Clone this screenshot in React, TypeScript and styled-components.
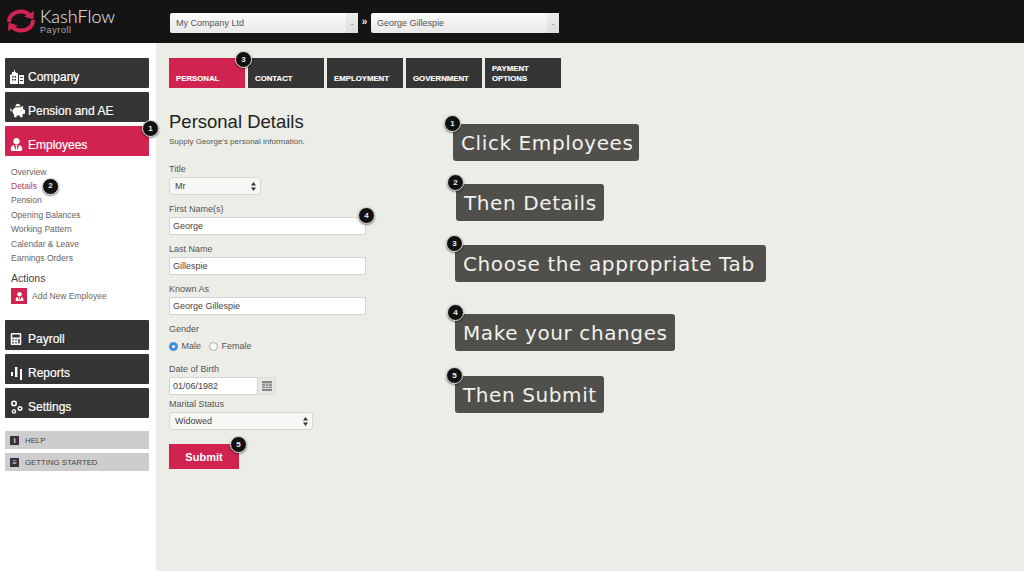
import React from "react";
import styled, { createGlobalStyle } from "styled-components";
import { FaCalculator, FaPiggyBank, FaUserTie } from "react-icons/fa";

const crimson = "#d0234f";
const darkButton = "#353535";

function Logo() {
  return (
    <svg width="30" height="24" viewBox="0 0 30 24" fill="none">
      <path d="M3 13C3 6 9 2.500 15 2.500c4 0 7 1.500 8.500 4" stroke={crimson} strokeWidth="4" />
      <path d="M27 11c0 7-6 10.500-12 10.500-4 0-7-1.500-8.500-4" stroke={crimson} strokeWidth="4" />
      <path d="M18 7.500l9.500 3L28 2z" fill={crimson} />
      <path d="M12 16.500l-9.500-3L2 22z" fill={crimson} />
    </svg>
  );
}

function CompanyIcon() {
  return (
    <svg width="14" height="14" viewBox="0 0 14 14" fill="#fff">
      <path d="M4 0h1v2l3 1.500V14H0V5l2-1V2h2z" />
      <rect x="9" y="5" width="5" height="9" />
      <g fill={darkButton}>
        <rect x="2" y="6" width="1.500" height="1.500" />
        <rect x="4.500" y="6" width="1.500" height="1.500" />
        <rect x="2" y="9" width="1.500" height="1.500" />
        <rect x="4.500" y="9" width="1.500" height="1.500" />
        <rect x="10" y="7" width="3" height="1" />
        <rect x="10" y="10" width="3" height="1" />
      </g>
    </svg>
  );
}

function BarsIcon() {
  return (
    <svg width="13" height="14" viewBox="0 0 13 14" fill="#fff">
      <rect x="1" y="6" width="2" height="4" />
      <rect x="5" y="1" width="2.400" height="10" />
      <rect x="10" y="3" width="2" height="11" />
    </svg>
  );
}

function GearsIcon() {
  return (
    <svg width="13" height="14" viewBox="0 0 13 14" fill="none" stroke="#fff">
      <circle cx="4" cy="3.500" r="2.200" strokeWidth="1.600" />
      <circle cx="10" cy="8.500" r="1.800" strokeWidth="1.400" />
      <circle cx="4" cy="11.500" r="1.600" strokeWidth="1.400" />
    </svg>
  );
}

function CalendarIcon() {
  return (
    <svg width="10" height="10" viewBox="0 0 10 10" fill="#86868a">
      <rect width="10" height="2.400" />
      <rect y="3.200" width="3" height="1.600" />
      <rect x="3.500" y="3.200" width="3" height="1.600" />
      <rect x="7" y="3.200" width="3" height="1.600" />
      <rect y="5.600" width="3" height="1.600" />
      <rect x="3.500" y="5.600" width="3" height="1.600" />
      <rect x="7" y="5.600" width="3" height="1.600" />
      <rect y="8" width="10" height="2" />
    </svg>
  );
}

function UpDown() {
  return (
    <svg width="5" height="9" viewBox="0 0 5 9" fill="#333">
      <path d="M2.500 0L5 3.600H0z" />
      <path d="M2.500 9L0 5.400H5z" />
    </svg>
  );
}

function App() {
  return (
    <Page>
      <GlobalStyle />
      <Header>
        <Brand>
          <Logo />
          <BrandText>
            <BrandName>KashFlow</BrandName>
            <BrandSub>Payroll</BrandSub>
          </BrandText>
        </Brand>
        <TopSelect>
          My Company Ltd
          <TopSelectArrow>-</TopSelectArrow>
        </TopSelect>
        <Chevron>»</Chevron>
        <TopSelect>
          George Gillespie
          <TopSelectArrow>-</TopSelectArrow>
        </TopSelect>
      </Header>

      <Columns>
        <Sidebar>
          <NavStack>
            <NavButton><NavIcon><CompanyIcon /></NavIcon>Company</NavButton>
            <NavButton><NavIcon><FaPiggyBank size={15} /></NavIcon>Pension and AE</NavButton>
            <NavButton $active>
              <NavIcon><FaUserTie size={13} /></NavIcon>Employees
              <Badge $left={137} $top={-6}>1</Badge>
            </NavButton>
          </NavStack>

          <SubNav>
            <SubLink>Overview</SubLink>
            <SubLink $active>
              Details
              <Badge $left={31} $top={-1}>2</Badge>
            </SubLink>
            <SubLink>Pension</SubLink>
            <SubLink>Opening Balances</SubLink>
            <SubLink>Working Pattern</SubLink>
            <SubLink>Calendar &amp; Leave</SubLink>
            <SubLink>Earnings Orders</SubLink>
          </SubNav>

          <ActionsTitle>Actions</ActionsTitle>
          <ActionRow>
            <ActionIcon><FaUserTie size={9} /></ActionIcon>
            Add New Employee
          </ActionRow>

          <NavStack $top={16}>
            <NavButton><NavIcon><FaCalculator size={12} /></NavIcon>Payroll</NavButton>
            <NavButton><NavIcon><BarsIcon /></NavIcon>Reports</NavButton>
            <NavButton><NavIcon><GearsIcon /></NavIcon>Settings</NavButton>
          </NavStack>

          <HelpStack>
            <HelpLink><HelpIcon>i</HelpIcon>HELP</HelpLink>
            <HelpLink><HelpIcon>≡</HelpIcon>GETTING STARTED</HelpLink>
          </HelpStack>
        </Sidebar>

        <Main>
          <Tabs>
            <Tab $active>PERSONAL</Tab>
            <Tab>
              CONTACT
              <Badge $left={-13} $top={-7}>3</Badge>
            </Tab>
            <Tab>EMPLOYMENT</Tab>
            <Tab>GOVERNMENT</Tab>
            <Tab>PAYMENT<br />OPTIONS</Tab>
          </Tabs>

          <Body>
            <Form>
              <Heading>Personal Details</Heading>
              <Intro>Supply George's personal information.</Intro>

              <FieldLabel $top={16}>Title</FieldLabel>
              <SelectBox $width={92}>Mr<UpDown /></SelectBox>

              <FieldLabel>First Name(s)</FieldLabel>
              <TextBox $width={197}>
                George
                <Badge $left={188} $top={-11}>4</Badge>
              </TextBox>

              <FieldLabel>Last Name</FieldLabel>
              <TextBox $width={197}>Gillespie</TextBox>

              <FieldLabel>Known As</FieldLabel>
              <TextBox $width={197}>George Gillespie</TextBox>

              <FieldLabel>Gender</FieldLabel>
              <RadioRow>
                <RadioDot $checked />
                <RadioText>Male</RadioText>
                <RadioDot />
                <RadioText>Female</RadioText>
              </RadioRow>

              <FieldLabel $top={9}>Date of Birth</FieldLabel>
              <DateRow>
                <TextBox $width={89}>01/06/1982</TextBox>
                <DateAddon><CalendarIcon /></DateAddon>
              </DateRow>

              <FieldLabel $top={3}>Marital Status</FieldLabel>
              <SelectBox $width={144}>Widowed<UpDown /></SelectBox>

              <SubmitButton>
                Submit
                <Badge $left={61} $top={-8}>5</Badge>
              </SubmitButton>
            </Form>

            <Callouts>
              <Callout $top={36} $left={0} $width={186}>
                <Badge $left={-9} $top={-9}>1</Badge>
                Click Employees
              </Callout>
              <Callout $top={23.5} $left={3} $width={148}>
                <Badge $left={-9} $top={-10}>2</Badge>
                Then Details
              </Callout>
              <Callout $top={24.5} $left={2} $width={311}>
                <Badge $left={-9} $top={-10}>3</Badge>
                Choose the appropriate Tab
              </Callout>
              <Callout $top={32.5} $left={2} $width={220}>
                <Badge $left={-8} $top={-10}>4</Badge>
                Make your changes
              </Callout>
              <Callout $top={25.5} $left={2} $width={149}>
                <Badge $left={-9} $top={-9}>5</Badge>
                Then Submit
              </Callout>
            </Callouts>
          </Body>
        </Main>
      </Columns>
    </Page>
  );
}

const GlobalStyle = createGlobalStyle`
  html, body {
    margin: 0;
    padding: 0;
    background: #edede7;
  }
  * {
    box-sizing: border-box;
  }
`;

const Page = styled.div`
  width: 1024px;
  height: 571px;
  overflow: hidden;
  display: flex;
  flex-direction: column;
  font-family: "Liberation Sans", Arial, sans-serif;
  color: #444;
`;

const Header = styled.header`
  height: 43px;
  flex: none;
  background: #141414;
  display: flex;
  align-items: flex-start;
  padding-left: 6px;
`;

const Brand = styled.div`
  width: 164px;
  margin-top: 7px;
  display: flex;
  align-items: flex-start;
  gap: 4px;

  svg {
    margin-top: 2px;
  }
`;

const BrandText = styled.div`
  display: flex;
  flex-direction: column;
`;

const BrandName = styled.div`
  font-family: "Lato", sans-serif;
  font-weight: 300;
  font-size: 18px;
  line-height: 18px;
  color: #f2f2f2;
`;

const BrandSub = styled.div`
  font-size: 9px;
  line-height: 10px;
  letter-spacing: 0.6px;
  color: #aaa;
`;

const TopSelect = styled.div`
  width: 188px;
  height: 20px;
  margin-top: 13px;
  background: linear-gradient(#fafafa, #e9e9e9);
  border-radius: 2px;
  font-size: 9px;
  color: #555;
  display: flex;
  align-items: center;
  justify-content: space-between;
  padding-left: 6px;
`;

const TopSelectArrow = styled.div`
  width: 12px;
  height: 100%;
  background: linear-gradient(#eeeeee, #dcdcdc);
  color: #666;
  font-size: 8px;
  display: flex;
  align-items: center;
  justify-content: center;
`;

const Chevron = styled.div`
  width: 13px;
  margin-top: 16px;
  text-align: center;
  color: #eee;
  font-size: 10px;
  font-weight: bold;
`;

const Columns = styled.div`
  flex: 1;
  display: flex;
`;

const Sidebar = styled.aside`
  width: 156px;
  flex: none;
  background: #fff;
  padding: 15px 7px 0 5px;
`;

const NavStack = styled.div<{ $top?: number }>`
  display: flex;
  flex-direction: column;
  gap: 4px;
  margin-top: ${(p) => p.$top ?? 0}px;
`;

const NavButton = styled.div<{ $active?: boolean }>`
  position: relative;
  height: 30px;
  border-radius: 1px;
  background: ${(p) => (p.$active ? crimson : darkButton)};
  color: #fff;
  font-size: 12px;
  display: flex;
  align-items: center;
  padding: 7px 0 0 5px;
  -webkit-text-stroke: 0.2px #fff;
`;

const NavIcon = styled.span`
  width: 18px;
  display: flex;
  align-items: center;
`;

const Badge = styled.span<{ $left: number; $top: number }>`
  position: absolute;
  left: ${(p) => p.$left}px;
  top: ${(p) => p.$top}px;
  width: 17px;
  height: 17px;
  border-radius: 50%;
  background: #111;
  border: 1.5px solid #e4e4e0;
  box-shadow: 0 1px 2px rgba(0, 0, 0, 0.5);
  color: #eee;
  font-family: "Liberation Sans", Arial, sans-serif;
  font-size: 8px;
  font-weight: bold;
  letter-spacing: 0;
  -webkit-text-stroke: 0;
  display: flex;
  align-items: center;
  justify-content: center;
  z-index: 2;
`;

const SubNav = styled.nav`
  margin-top: 8.5px;
  padding-left: 6px;
`;

const SubLink = styled.div<{ $active?: boolean }>`
  position: relative;
  height: 14.45px;
  line-height: 14.45px;
  font-size: 8.5px;
  color: ${(p) => (p.$active ? "#b03a5b" : "#666")};
`;

const ActionsTitle = styled.div`
  margin: 6px 0 0 6px;
  font-size: 10.5px;
  line-height: 13px;
  color: #444;
`;

const ActionRow = styled.div`
  margin: 3.5px 0 0 6px;
  display: flex;
  align-items: center;
  gap: 5px;
  font-size: 8.5px;
  color: #666;
`;

const ActionIcon = styled.span`
  width: 16px;
  height: 16px;
  background: ${crimson};
  color: #fff;
  display: flex;
  align-items: center;
  justify-content: center;
`;

const HelpStack = styled.div`
  margin-top: 13px;
  display: flex;
  flex-direction: column;
  gap: 4px;
`;

const HelpLink = styled.div`
  height: 18px;
  background: #cdcdcd;
  font-size: 7.8px;
  color: #444;
  display: flex;
  align-items: center;
  gap: 6px;
  padding-left: 5px;
`;

const HelpIcon = styled.span`
  width: 9px;
  height: 9px;
  background: #3a3040;
  color: #ddd;
  font-size: 8px;
  font-weight: bold;
  display: flex;
  align-items: center;
  justify-content: center;
`;

const Main = styled.main`
  flex: 1;
  padding: 15px 0 0 13px;
`;

const Tabs = styled.div`
  display: flex;
  gap: 3px;
`;

const Tab = styled.div<{ $active?: boolean }>`
  position: relative;
  width: 76px;
  height: 30px;
  background: ${(p) => (p.$active ? crimson : darkButton)};
  color: #fff;
  font-size: 7.8px;
  line-height: 9.5px;
  font-weight: bold;
  display: flex;
  flex-direction: column;
  justify-content: flex-end;
  padding: 0 0 5px 7px;
  -webkit-text-stroke: 0.15px #fff;
`;

const Body = styled.div`
  display: flex;
`;

const Form = styled.form`
  width: 284px;
  flex: none;
`;

const Heading = styled.h1`
  margin: 22px 0 0;
  font-size: 18.5px;
  line-height: 23px;
  font-weight: 400;
  color: #222;
`;

const Intro = styled.p`
  margin: 3px 0 0;
  font-size: 8px;
  line-height: 11px;
  color: #555;
`;

const FieldLabel = styled.div<{ $top?: number }>`
  margin-top: ${(p) => p.$top ?? 8}px;
  font-size: 9px;
  line-height: 12px;
  height: 14px;
  color: #555;
`;

const SelectBox = styled.div<{ $width: number }>`
  width: ${(p) => p.$width}px;
  height: 18px;
  background: #f6f6f4;
  border: 1px solid #d6d6d2;
  border-radius: 3px;
  display: flex;
  align-items: center;
  justify-content: space-between;
  padding: 0 4px 0 5px;
  font-size: 9px;
  color: #444;
`;

const TextBox = styled.div<{ $width: number }>`
  position: relative;
  width: ${(p) => p.$width}px;
  height: 18px;
  background: #fff;
  border: 1px solid #d4d4d0;
  display: flex;
  align-items: center;
  padding-left: 3px;
  font-size: 9px;
  color: #444;
`;

const RadioRow = styled.div`
  height: 17px;
  padding-top: 1px;
  display: flex;
  align-items: center;
`;

const RadioDot = styled.span<{ $checked?: boolean }>`
  width: 9px;
  height: 9px;
  border-radius: 50%;
  background: ${(p) => (p.$checked ? "#fff" : "#fbfbfb")};
  border: ${(p) => (p.$checked ? "3px solid #3f8fdc" : "1px solid #aaa")};
`;

const RadioText = styled.span`
  font-size: 9px;
  color: #555;
  margin: 0 8px 0 3.5px;
`;

const DateRow = styled.div`
  display: flex;
`;

const DateAddon = styled.div`
  width: 18px;
  height: 18px;
  background: #e9e9e4;
  border: 1px solid #dcdcd7;
  border-left: none;
  display: flex;
  align-items: center;
  justify-content: center;
`;

const SubmitButton = styled.div`
  position: relative;
  margin-top: 14px;
  width: 70px;
  height: 25px;
  background: ${crimson};
  color: #fff;
  font-size: 11px;
  font-weight: bold;
  display: flex;
  align-items: center;
  justify-content: center;
`;

const Callouts = styled.div`
  display: flex;
  flex-direction: column;
  align-items: flex-start;
`;

const Callout = styled.div<{ $top: number; $left: number; $width: number }>`
  position: relative;
  margin: ${(p) => p.$top}px 0 0 ${(p) => p.$left}px;
  width: ${(p) => p.$width}px;
  height: 36.5px;
  padding: 1px 0 0 8px;
  background: #504f4c;
  border-radius: 3px;
  color: #f1f1ee;
  font-family: "DejaVu Sans", sans-serif;
  font-size: 20px;
  letter-spacing: 0.6px;
  white-space: nowrap;
  display: flex;
  align-items: center;
`;

export default App;
